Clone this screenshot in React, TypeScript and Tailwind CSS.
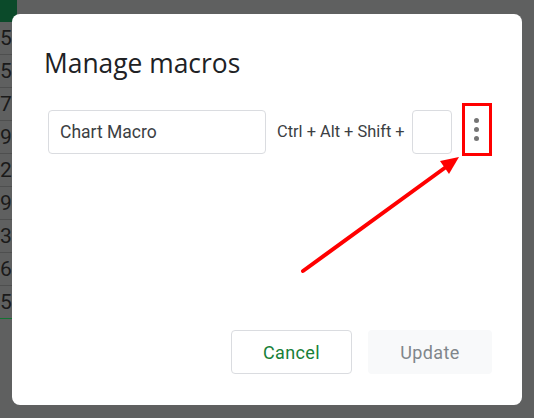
export default function App() {
  const digits = ["5", "5", "7", "9", "2", "9", "3", "6", "5"];

  return (
    <div className="relative w-[534px] h-[418px] overflow-hidden bg-[#5f6060] font-['Roboto',sans-serif]">
      {/* spreadsheet behind the modal */}
      <div className="flex w-[17px] flex-col">
        <div className="h-[22px] bg-[#0b4a2a]" />
        {digits.map((d, i) => (
          <div
            key={i}
            className={
              "h-[33px] border-b text-[21px] leading-[33px] text-[#1a1a1a] " +
              (i === digits.length - 1 ? "border-[#137333]" : "border-[#4e4f4f]")
            }
          >
            {d}
          </div>
        ))}
      </div>

      {/* modal */}
      <div className="absolute left-[12px] top-[14px] flex h-[391px] w-[510px] flex-col rounded-[8px] bg-white pl-[32px] pr-[30px]">
        <h1 className="mt-[33px] font-['Open_Sans',sans-serif] text-[26.4px] leading-[32px] text-[#202124]">
          Manage macros
        </h1>

        <div className="mt-[24px] flex items-start">
          <div className="ml-[4px] mt-[7px] flex h-[44px] w-[218px] items-center rounded-[4px] border border-[#dadce0] px-[11px] text-[17.5px] text-[#3c4043]">
            Chart Macro
          </div>
          <div className="ml-[11px] mt-[7px] flex h-[44px] items-center text-[16.4px] text-[#3c4043]">
            Ctrl + Alt + Shift +
          </div>
          <div className="ml-[7px] mt-[7px] h-[44px] w-[40px] rounded-[4px] border border-[#dadce0]" />
          <div className="ml-[10px] flex h-[53px] w-[30px] flex-col items-center justify-center gap-[4px] border-[3px] border-[#ff0000]">
            <span className="h-[5px] w-[5px] rounded-full bg-[#757575]" />
            <span className="h-[5px] w-[5px] rounded-full bg-[#757575]" />
            <span className="h-[5px] w-[5px] rounded-full bg-[#757575]" />
          </div>
        </div>

        <div className="mt-auto mb-[31px] flex justify-end gap-[16px]">
          <button className="h-[44px] w-[121px] rounded-[4px] border border-[#dadce0] bg-white text-[18px] tracking-[0.4px] text-[#188038]">
            Cancel
          </button>
          <button className="h-[44px] w-[124px] rounded-[4px] bg-[#f8f9fa] text-[18px] tracking-[0.4px] text-[#80868b]">
            Update
          </button>
        </div>
      </div>

      {/* annotation arrow */}
      <svg className="absolute left-0 top-0" width="534" height="418" viewBox="0 0 534 418">
        <line x1="303" y1="271" x2="446" y2="167" stroke="#ff0000" strokeWidth="4" strokeLinecap="round" />
        <polygon points="459,157 440,161 449,174" fill="#ff0000" />
      </svg>
    </div>
  );
}
